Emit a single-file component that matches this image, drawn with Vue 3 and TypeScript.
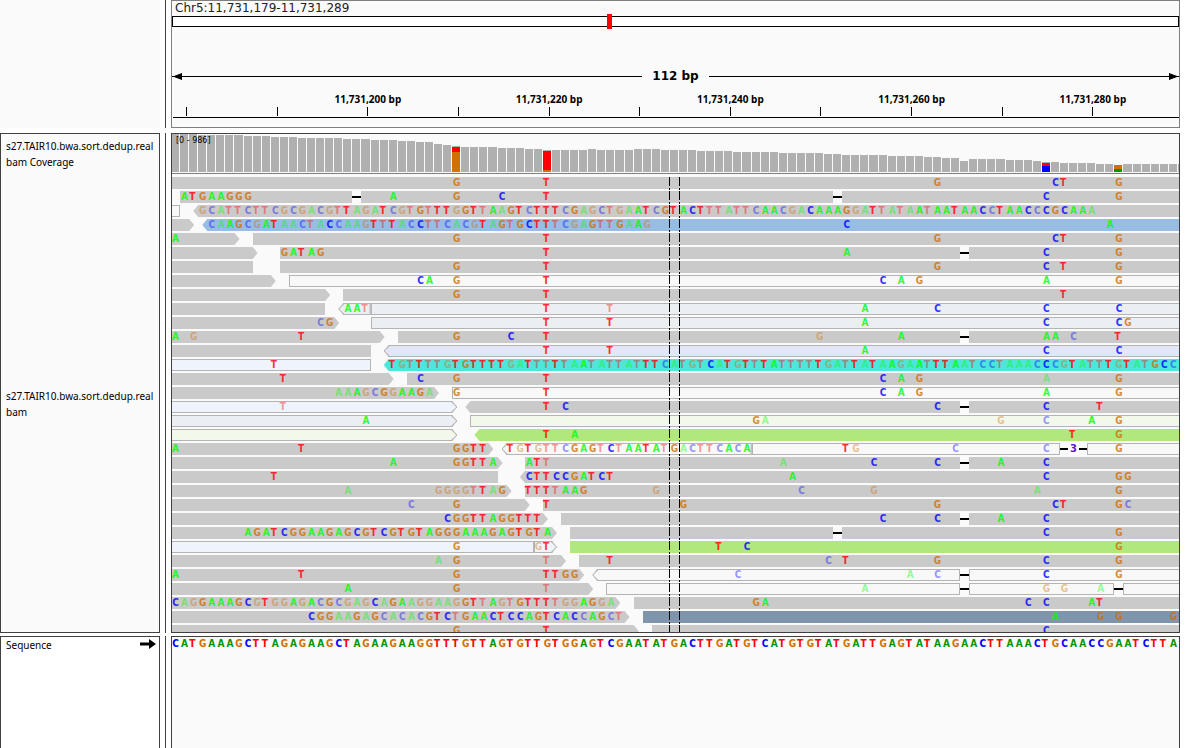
<script setup lang="ts">
type Tone =
  | 'grey' | 'white' | 'mist' | 'ice' | 'lavender' | 'mint'
  | 'green' | 'cyan' | 'blue' | 'slate'
type Tip = 'none' | 'left' | 'right'

interface Read { start: number; end: number; tone: Tone; tip: Tip }
interface Base { col: number; base: string; faint: boolean }
interface Gap { start: number; end: number; label: string }
interface Row { reads: Read[]; bases: Base[]; gaps: Gap[] }

const END = 112

/* "start-end tone tip", separated by commas; a missing end runs to the edge of the view */
function parseReads(text: string): Read[] {
  return text.split(',').map((part) => {
    const [span, tone, tip] = part.trim().split(' ')
    const [start, end] = span.split('-')
    return {
      start: Number(start),
      end: end ? Number(end) : END,
      tone: tone as Tone,
      tip: tip === 'l' ? 'left' : tip === 'r' ? 'right' : 'none',
    }
  })
}

/* "31G 18aaAg": a column followed by called bases; lower case is low quality */
function parseBases(text: string): Base[] {
  const out: Base[] = []
  for (const run of text.split(' ').filter(Boolean)) {
    const col = parseInt(run, 10)
    const letters = run.replace(/^\d+/, '')
    letters.split('').forEach((ch, i) => {
      out.push({ col: col + i, base: ch.toUpperCase(), faint: ch !== ch.toUpperCase() })
    })
  }
  return out
}

function row(reads: string, bases: string, gaps: [number, number, string?][] = []): Row {
  return {
    reads: parseReads(reads),
    bases: parseBases(bases),
    gaps: gaps.map(([start, end, label]) => ({ start, end, label: label ?? '' })),
  }
}

const rows: Row[] = [
  row('0- grey', '31G 41T 84G 97C 98T 104G'),
  row('1-20 grey,21-73 grey,74- grey', '1ATGAAGGG 24A 31G 36C 41T 96C 104G', [[20, 21], [73, 74]]),
  row('0-1 white,3- grey l',
    '3gcattcttcgcgacgtTagaTcgtGtTTgGTtAa 37GTcTTTcGagctgaATcGTACTttattcAAcgaCAAAGgaTtataAtAATAACcTAACcCGCAAa'),
  row('0-2 grey r,4- blue l', '4caAGcgATaactaCcaagTtTacCttcacgTaGtGCTTtcgaGttGaAg 74C 103A'),
  row('0-7 grey r,9- grey', '0A 31G 41T 84G 97C 98T 104G'),
  row('0-9 grey r,12-87 grey,88- grey', '12GATAG 41T 74A 96C 104G', [[87, 88]]),
  row('0-9 grey,12- grey', '31G 41T 84G 96C 98T 104G'),
  row('0-11 grey r,13- white', '27CA 31G 41T 78C 80A 82G 96A 104G'),
  row('0-17 grey r,19- grey', '31G 41T 98T'),
  row('0-17 grey,19-22 mist l,22- mist', '19AAt 41T 48t 76A 84C 96C 104C'),
  row('0-18 grey r,22- mist', '16cG 41T 48T 76A 96C 104CG'),
  row('0-23 grey r,25-87 grey,88- grey', '0A 2g 14T 31G 37C 41T 71g 80A 96AA 99c 104T', [[87, 88]]),
  row('0-22 grey,24- lavender l', '41T 48T 76A 96C 104C'),
  row('0-22 ice,24- cyan l',
    '11T 24TgtTttgTGTTTT 37gaTttTtaAtattatTTcatgtCaTgTtTAttttTgat 75TaTaAgaAtTTAatcctaaacCcgTattTgTatGCc'),
  row('0-24 grey r,26- grey', '12T 27C 31G 41T 78C 80A 82G 96a 104G'),
  row('0-29 grey r,31- white', '18aaAgcGgAAGa 31G 41T 78C 80A 82G 96A 104G'),
  row('0-31 ice r,33-87 grey l,88- grey', '12t 41T 43C 84C 96C 102T', [[87, 88]]),
  row('0-31 mist r,33- mint', '21A 64Ga 91g 96c 101A 104G'),
  row('0-31 mint r,34- green l', '41T 44A 99T 104G'),
  row('0-35 grey r,37-64 white l,64-98 white,101- white',
    '0A 14T 31GGTT 37TgTgttcGAGtCtAATAtGacttcAcA 74Tg 86c 96c 104G', [[98, 101, '3']]),
  row('0-36 grey r,39-87 grey,88- grey', '24A 31GGTTA 39ATt 67a 77C 84C 91A 96C', [[87, 88]]),
  row('0-36 grey,39- grey l', '11T 39CTTCCGATCT 68A 96C 104GG'),
  row('0-37 grey r,39- grey', '19a 29ggggtTaG 39TTTtAAG 53g 69c 77g 95a 104G'),
  row('0-39 grey r,41- grey', '26c 31G 41T 56G 84G 97CT 104Gc'),
  row('0-41 grey r,43-87 grey,88- grey', '30CGGTTAGGTTT 78C 84C 91A 96C', [[87, 88]]),
  row('0-42 grey r,44-73 grey,74- grey', '8AGATCGGAAGAGCGTCGTGTAGGGAAAGAGTGTA 96C 104G', [[73, 74]]),
  row('0-40 ice,40-42 ice r,44- green', '31G 40gT 60T 63C 104G'),
  row('0-43 grey r,45- grey', '29a 31G 41t 48T 72c 74T 84G 96C 104G'),
  row('0-45 grey r,47-87 white l,88- white', '0A 14T 31G 41TTGG 62c 81a 84c 96C 104G', [[87, 88]]),
  row('0-46 grey r,48-87 white,88-104 white,105- white', '19A 31G 41t 76a 96g 98g 102a', [[87, 88], [104, 105]]),
  row('0-49 grey r,51- grey', '0CagGAAAGCgTggAgAcGcgagCaGAaggaagGTtAgtGTTTtggAGga 64GA 94C 96C 101AT'),
  row('0-50 grey r,52- slate', '15CGGaaGaGcacacGTCtGAACTCCAGTCACcAGct 97A 102G 104G 110G'),
  row('0-51 grey r,53- grey', '31G 41T 96C'),
]

const sequence = parseBases(
  '0CATGAAAGCTTAGAGAAGCTAGAAGAAGGTTTGTTAGTGTTGTGGAGTCGAATATGACTTGATGTCATGTGTATGATTGAGTATAAGAACTTAAACTGCAACCGAATCTTA',
)

/* [number of columns, bar height] */
const depthRuns: [number, number][] = [
  [3, 38], [5, 37], [3, 36], [3, 35], [5, 34], [3, 33], [3, 32], [2, 31], [2, 30], [1, 28], [1, 27],
  [1, 26], [4, 25], [3, 24], [2, 23], [1, 22], [4, 22], [1, 23], [4, 22], [3, 23], [4, 22], [4, 21],
  [5, 20], [5, 19], [2, 18], [5, 17], [4, 16], [2, 15], [2, 14], [1, 11], [4, 13], [3, 12], [1, 11],
  [2, 10], [4, 9], [2, 8], [1, 7], [7, 8],
]
const alleles: Record<number, { base: string; height: number }[]> = {
  31: [{ base: 'T', height: 5 }, { base: 'G', height: 20 }],
  41: [{ base: 'T', height: 19 }, { base: 'G', height: 2 }],
  96: [{ base: 'T', height: 3 }, { base: 'C', height: 6 }],
  104: [{ base: 'G', height: 4 }, { base: 'A', height: 3 }],
}
const depth = depthRuns
  .flatMap(([count, height]) => Array.from({ length: count }, () => height))
  .map((height, col) => ({ height, parts: alleles[col] ?? [] }))

const ticks = Array.from({ length: 11 }, (_, i) => ({
  col: 1 + i * 10,
  label: i % 2 === 0 && i > 0 ? `11,731,${180 + i * 10} bp` : '',
}))

/* where the visible window lies on the chromosome */
const windowAt = 0.432

const span = (start: number, end: number) => ({ gridColumn: `${start + 1} / ${end + 1}` })
</script>

<template>
  <main class="browser">
    <section class="band band-ruler">
      <div class="corner"></div>
      <div class="divider"></div>
      <div class="panel ruler">
        <h1 class="locus">Chr5:11,731,179-11,731,289</h1>
        <div class="ideogram"><i class="here" :style="{ left: windowAt * 100 + '%' }"></i></div>
        <div class="extent">
          <svg class="head" viewBox="0 0 10 7" aria-hidden="true"><path d="M0 3.5H10M2 3.5L10 .5V6.5Z" /></svg>
          <span class="rule"></span>
          <strong class="width">112 bp</strong>
          <span class="rule"></span>
          <svg class="head" viewBox="0 0 10 7" aria-hidden="true"><path d="M10 3.5H0M8 3.5L0 .5V6.5Z" /></svg>
        </div>
        <div class="ticks">
          <div v-for="t in ticks" :key="t.col" class="tick" :style="span(t.col, t.col + 1)">
            <span class="tick-label">{{ t.label }}</span>
            <i class="mark"></i>
          </div>
        </div>
      </div>
    </section>

    <section class="band band-reads">
      <div class="names">
        <p class="name name-coverage">s27.TAIR10.bwa.sort.dedup.real<br>bam Coverage</p>
        <p class="name name-reads">s27.TAIR10.bwa.sort.dedup.real<br>bam</p>
      </div>
      <div class="divider"></div>
      <div class="panel">
        <div class="coverage">
          <span class="range">[0 - 986]</span>
          <div class="columns bars">
            <div v-for="(d, i) in depth" :key="i" class="bar" :style="{ height: d.height + 'px' }">
              <i v-for="p in d.parts" :key="p.base" class="part" :class="'fill-' + p.base" :style="{ height: p.height + 'px' }"></i>
            </div>
          </div>
        </div>
        <div class="pile">
          <div v-for="(r, i) in rows" :key="i" class="columns row">
            <div v-for="d in r.reads" :key="'r' + d.start" class="read" :class="[d.tone, 'tip-' + d.tip]" :style="span(d.start, d.end)"></div>
            <div v-for="g in r.gaps" :key="'g' + g.start" class="gap" :style="span(g.start, g.end)"><b v-if="g.label">{{ g.label }}</b></div>
            <span v-for="b in r.bases" :key="'b' + b.col" class="base" :class="['base-' + b.base, { faint: b.faint }]" :style="span(b.col, b.col + 1)">{{ b.base }}</span>
          </div>
          <div class="center"></div>
        </div>
      </div>
    </section>

    <section class="band band-sequence">
      <div class="names names-sequence">
        <span>Sequence</span>
        <svg class="strand" viewBox="0 0 16 10" aria-hidden="true"><path d="M0 3.5H9V0L16 5L9 10V6.5H0Z" /></svg>
      </div>
      <div class="divider"></div>
      <div class="panel">
        <div class="columns sequence">
          <span v-for="b in sequence" :key="b.col" class="base solid" :class="'base-' + b.base" :style="span(b.col, b.col + 1)">{{ b.base }}</span>
        </div>
      </div>
    </section>
  </main>
</template>

<style>
body {
  margin: 0;
  background: #fff;
}
</style>

<style scoped>
.browser {
  display: flex;
  flex-direction: column;
  box-sizing: border-box;
  height: 100vh;
  padding-right: 19px;
  font-family: "DejaVu Sans", sans-serif;
  font-size: 10px;
  color: #000;
}
.band {
  display: grid;
  grid-template-columns: 160px 1px minmax(0, 1fr);
  grid-template-rows: minmax(0, 1fr);
  column-gap: 5px;
}
.band-ruler { flex: none; height: 128px; margin-bottom: 5px; }
.band-reads { flex: 1; min-height: 0; margin-bottom: 3px; }
.band-sequence { flex: none; height: 112px; }
.corner { background: #fafafa; }
.divider { background: #404040; }
.panel {
  display: flex;
  flex-direction: column;
  overflow: hidden;
  border: 1px solid #404040;
  background: #fafafa;
}
.band-sequence .panel, .band-sequence .names { border-bottom: 0; }

.ruler { border-color: #808080; }
.locus {
  margin: 0 0 0 3px;
  height: 15px;
  font-size: 12px;
  line-height: 14px;
  font-weight: 400;
  color: #222;
}
.ideogram {
  position: relative;
  height: 9px;
  border: 1px solid #000;
  background: #fff;
}
.here {
  position: absolute;
  top: -3px;
  width: 5px;
  height: 15px;
  background: #f00;
}
.extent {
  display: flex;
  align-items: center;
  height: 16px;
  margin-top: 41px;
}
.head {
  flex: none;
  width: 10px;
  height: 7px;
  fill: #000;
  stroke: #000;
  stroke-width: 1;
}
.rule { flex: 1; height: 1px; background: #000; }
.width {
  padding: 0 10px;
  font-size: 12px;
  line-height: 16px;
}
.ticks {
  display: grid;
  grid-template-columns: repeat(112, minmax(0, 1fr));
  margin: 8px -9px 0 1px;
  border-bottom: 1px solid #000;
}
.tick {
  display: flex;
  flex-direction: column;
  align-items: center;
  height: 25px;
}
.tick-label {
  height: 15px;
  font: bold 10px/14px "Noto Sans", sans-serif;
  white-space: nowrap;
}
.mark { width: 1px; height: 9px; background: #000; }

.names {
  box-sizing: border-box;
  overflow: hidden;
  padding: 0 0 0 5px;
  border: 1px solid #404040;
  background: #fafafa;
  white-space: nowrap;
  font-family: "Noto Sans", sans-serif;
  line-height: 16px;
}
.name { margin: 0; }
.name-coverage { padding-top: 4px; height: 39px; }
.name-reads { padding-top: 211px; }
.names-sequence {
  display: flex;
  justify-content: space-between;
  align-items: flex-start;
  padding-right: 3px;
  background: #fff;
}
.strand { width: 16px; height: 10px; margin-top: 2px; }

.columns {
  display: grid;
  grid-template-columns: repeat(112, minmax(0, 1fr));
  margin: 0 -8px 0 -1px;
}
.coverage {
  position: relative;
  flex: none;
  height: 39px;
  border-bottom: 1px solid #808080;
}
.range {
  position: absolute;
  top: 0;
  left: 4px;
  z-index: 1;
  font-size: 8px;
  line-height: 14px;
}
.bars { height: 38px; align-items: end; }
.bar {
  display: flex;
  flex-direction: column;
  justify-content: flex-end;
  margin-right: 1px;
  background: #b0b0b0;
}
.fill-A { background: #009600; }
.fill-C { background: #00f; }
.fill-G { background: #d17105; }
.fill-T { background: #f00; }

.pile {
  position: relative;
  flex: 1;
  min-height: 0;
  overflow: hidden;
  padding-top: 3px;
}
.row { height: 12px; margin-bottom: 2px; }
.read { grid-row: 1; height: 12px; box-sizing: border-box; background: #cacaca; }
.white, .mist, .ice, .lavender, .mint { border: 1px solid #b4b4b4; }
.white { --tone: #f8f8f8; }
.mist { --tone: #ebeef3; }
.ice { --tone: #eef3fc; }
.lavender { --tone: #e3e6f6; }
.mint { --tone: #f2f9ea; }
.read.white, .read.mist, .read.ice, .read.lavender, .read.mint { background: var(--tone); }
.green { background: #b1e87d; }
.cyan { background: #4ee5db; }
.blue { background: #97bde5; }
.slate { background: #7f95ac; }
.tip-left {
  --shape: polygon(5px 0, 100% 0, 100% 100%, 5px 100%, 0 50%);
  margin-left: -5px;
  clip-path: var(--shape);
}
.tip-right {
  --shape: polygon(0 0, calc(100% - 5px) 0, 100% 50%, calc(100% - 5px) 100%, 0 100%);
  margin-right: -5px;
  clip-path: var(--shape);
}
.read.tip-left:is(.white, .mist, .ice, .lavender, .mint),
.read.tip-right:is(.white, .mist, .ice, .lavender, .mint) {
  background: #b4b4b4;
}
.tip-left:is(.white, .mist, .ice, .lavender, .mint)::before,
.tip-right:is(.white, .mist, .ice, .lavender, .mint)::before {
  content: "";
  display: block;
  height: 100%;
  background: var(--tone);
  clip-path: var(--shape);
}
.gap {
  grid-row: 1;
  display: flex;
  justify-content: center;
  height: 12px;
  background: linear-gradient(#000, #000) center / 100% 2px no-repeat #fafafa;
}
.gap b {
  padding: 0 2px;
  background: #fff;
  color: #6a10c8;
  font-size: 10px;
  line-height: 12px;
}
.base {
  grid-row: 1;
  height: 12px;
  font: bold 10px/12px "DejaVu Sans Condensed", "DejaVu Sans", sans-serif;
  font-stretch: condensed;
  text-align: center;
  opacity: 0.8;
}
.base-A { color: #0f0; }
.base-C { color: #00f; }
.base-G { color: #d17105; }
.base-T { color: #f00; text-align: left; }
.faint { opacity: 0.4; }
.solid { opacity: 1; }
.solid.base-A { color: #009600; }
.sequence { margin-top: 1px; }
.center {
  position: absolute;
  top: 3px;
  bottom: 0;
  left: calc(50% - 7px);
  width: 11px;
  background:
    repeating-linear-gradient(#000 0 9px, transparent 9px 11px, #000 11px 13px, transparent 13px 14px) left / 1px 100% no-repeat,
    repeating-linear-gradient(#000 0 9px, transparent 9px 11px, #000 11px 13px, transparent 13px 14px) right / 1px 100% no-repeat;
}
</style>
